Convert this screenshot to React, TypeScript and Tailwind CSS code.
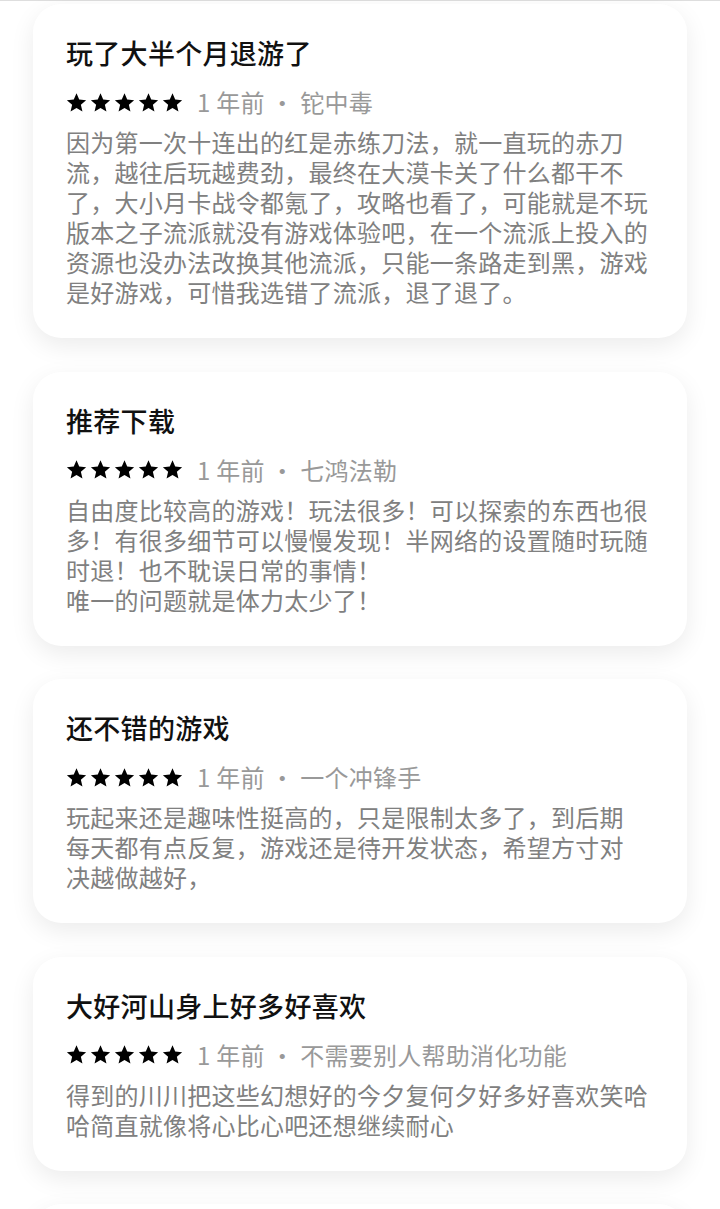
import React from "react";

type Review = {
  title: string;
  author: string;
  time: string;
  body: string;
};

const reviews: Review[] = [
  {
    title: "玩了大半个月退游了",
    time: "1 年前",
    author: "铊中毒",
    body: "因为第一次十连出的红是赤练刀法，就一直玩的赤刀流，越往后玩越费劲，最终在大漠卡关了什么都干不了，大小月卡战令都氪了，攻略也看了，可能就是不玩版本之子流派就没有游戏体验吧，在一个流派上投入的资源也没办法改换其他流派，只能一条路走到黑，游戏是好游戏，可惜我选错了流派，退了退了。",
  },
  {
    title: "推荐下载",
    time: "1 年前",
    author: "七鸿法勒",
    body: "自由度比较高的游戏！玩法很多！可以探索的东西也很多！有很多细节可以慢慢发现！半网络的设置随时玩随时退！也不耽误日常的事情！\n唯一的问题就是体力太少了！",
  },
  {
    title: "还不错的游戏",
    time: "1 年前",
    author: "一个冲锋手",
    body: "玩起来还是趣味性挺高的，只是限制太多了，到后期\n每天都有点反复，游戏还是待开发状态，希望方寸对\n决越做越好，",
  },
  {
    title: "大好河山身上好多好喜欢",
    time: "1 年前",
    author: "不需要别人帮助消化功能",
    body: "得到的川川把这些幻想好的今夕复何夕好多好喜欢笑哈哈简直就像将心比心吧还想继续耐心",
  },
];

function Star() {
  return (
    <svg viewBox="0 0 24 24" className="h-[21px] w-[21px] fill-black">
      <path d="M12 1.4l3.1 7.3 7.9.7-6 5.1 1.8 7.8L12 18.2l-6.8 4.1 1.8-7.8-6-5.1 7.9-.7z" />
    </svg>
  );
}

function ReviewCard({ review }: { review: Review }) {
  return (
    <div className="rounded-[28px] bg-white px-[33px] pt-[31px] pb-[31px] shadow-[0_8px_24px_rgba(0,0,0,0.08)]">
      <h2 className="text-[27px] leading-[36px] font-medium tracking-[0.3px] text-[#111]">
        {review.title}
      </h2>
      <div className="mt-[16px] flex h-[30px] items-center gap-[14px]">
        <div className="flex gap-[3px]">
          {[0, 1, 2, 3, 4].map((i) => (
            <Star key={i} />
          ))}
        </div>
        <span className="text-[24px] leading-[30px] tracking-[0.25px] text-[#999]">
          {review.time} · {review.author}
        </span>
      </div>
      <p className="mt-[10px] whitespace-pre-line text-[24px] leading-[30px] tracking-[0.25px] text-[#808080]">
        {review.body}
      </p>
    </div>
  );
}

export default function App() {
  return (
    <div className="min-h-screen bg-white font-['Noto_Sans_CJK_SC','Noto_Sans',sans-serif]">
      <div className="h-px bg-[#dedede]" />
      <div className="flex flex-col gap-[33.5px] px-[33px] pt-[3px] pb-10">
        {reviews.map((r, i) => (
          <ReviewCard key={i} review={r} />
        ))}
        {/* next card peeking in at the bottom of the list */}
        <div className="h-[220px] rounded-[28px] bg-white shadow-[0_8px_24px_rgba(0,0,0,0.08)]" />
      </div>
    </div>
  );
}
